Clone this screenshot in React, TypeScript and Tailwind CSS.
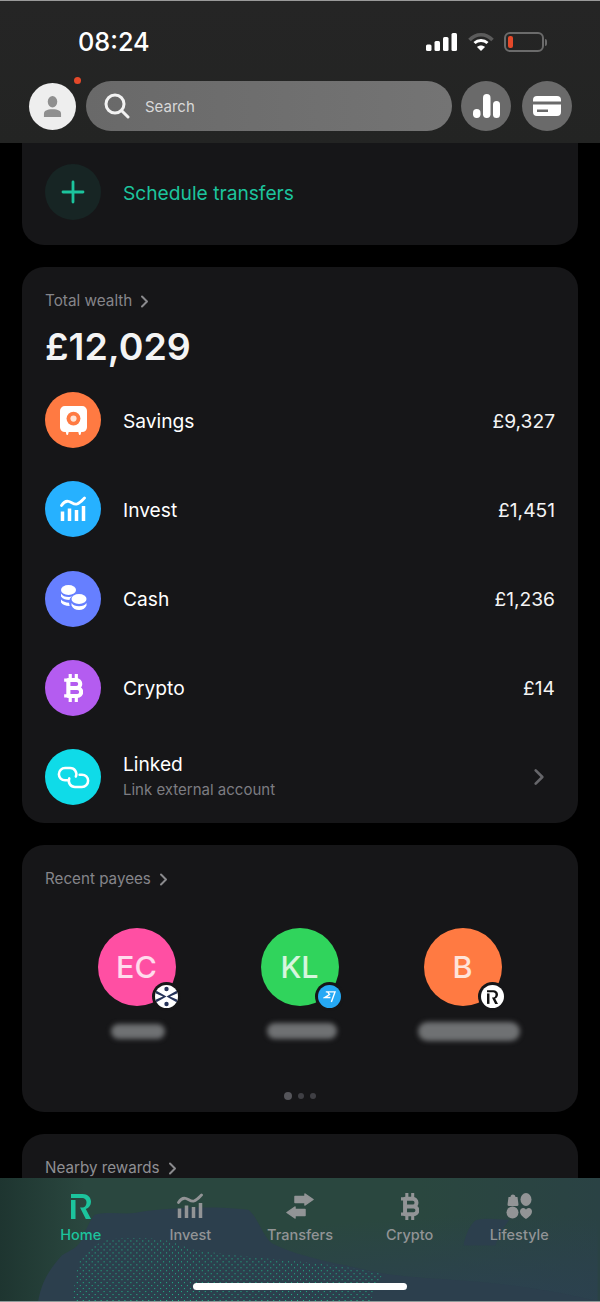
import React from 'react';

const Chevron = ({ className = 'w-[9px] h-[13px] text-[#8a8a8d]' }: { className?: string }) => (
  <svg viewBox="0 0 9 13" className={className} fill="none" stroke="currentColor" strokeWidth="2" strokeLinecap="round" strokeLinejoin="round">
    <path d="M2 1.500 7 6.500 2 11.500" />
  </svg>
);

const BitcoinIcon = ({ className }: { className?: string }) => (
  <svg viewBox="0 0 20 30" className={className} fill="none" stroke="currentColor" strokeWidth="4.400" strokeLinejoin="round">
    <path d="M4.500 6.500h8.500a4.200 4.200 0 0 1 0 8.500H4.500m0 0h9.500a4.200 4.200 0 0 1 0 8.500H4.500V6.500Z" />
    <path d="M6.500 0v6M13 0v6M6.500 24v6M13 24v6M0 6.500h5M0 23.500h5" strokeWidth="3.400" />
  </svg>
);

const InvestIcon = ({ className }: { className?: string }) => (
  <svg viewBox="0 0 26 26" className={className} fill="none" stroke="currentColor" strokeLinecap="round">
    <path d="M1.500 9.500C4 5.500 6 4.500 9 5.500s5 3.500 8 2.500 5-3.500 7.500-6" strokeWidth="2.800" />
    <path d="M2.500 15.500V25M9.500 12.500V25M16.500 14V25M23.500 10V25" strokeWidth="3.500" strokeLinecap="butt" />
  </svg>
);

const SafeIcon = () => (
  <svg viewBox="0 0 28 30" className="w-[27px] h-[29px]">
    <path d="M5 0h18a5 5 0 0 1 5 5v17a5 5 0 0 1-5 5h-1l-.5 2a1 1 0 0 1-2 0l-.5-2H9l-.5 2a1 1 0 0 1-2 0L6 27H5a5 5 0 0 1-5-5V5a5 5 0 0 1 5-5Z" fill="#fff" />
    <circle cx="14" cy="13" r="7.200" fill="#ff7a42" />
    <circle cx="14" cy="13" r="3.200" fill="#ffe3d6" />
  </svg>
);

const CoinsIcon = () => (
  <svg viewBox="0 0 28 28" className="w-[28px] h-[28px]" fill="#fff">
    <ellipse cx="9.500" cy="5" rx="7.500" ry="5" />
    <path d="M2 8.500c1.500 2.500 4 3.500 7.500 3.500 1.500 0 3-.2 4-.7-1.500 1-2.800 2-3 3.700-3.500 0-6.500-.8-8.500-3.500V8.500Z" />
    <path d="M2 14.500c2 2.200 4.500 3 8 3.200l.7 3.300c-4.500 0-7.200-1.200-8.700-3.500v-3Z" />
    <ellipse cx="20" cy="14" rx="7.500" ry="5" />
    <path d="M12.500 18c1.500 2.200 4 3.200 7.500 3.200s6-1 7.500-3.200v2.500C26 23.500 23.500 25 20 25s-6-1.500-7.500-4.500V18Z" />
  </svg>
);

const LinkIcon = () => (
  <svg viewBox="-2 -2 35 24" className="w-[33px] h-[23px]" fill="none" stroke="#fff" strokeWidth="2.700" strokeLinecap="round">
    <path d="M9 13H6.500a6.500 6.500 0 0 1 0-13H12a6.500 6.500 0 0 1 6 9" />
    <path d="M22 7h2.500a6.500 6.500 0 0 1 0 13H17a6.500 6.500 0 0 1-6-9" />
  </svg>
);

const RLogo = ({ className }: { className?: string }) => (
  <svg viewBox="0 0 20 25" className={className} fill="currentColor">
    <path d="M0 6h4.500v19H0V6Z" />
    <path d="M0 0h11.500C16.500 0 20 3.300 20 7.800c0 3.500-2 6.200-5.200 7.200L20 25h-5.200L9 13.500h2.300c2.700 0 4.200-2.200 4.200-5.500 0-2.300-1.800-4-4.300-4H0V0Z" />
  </svg>
);

const TransferIcon = ({ className }: { className?: string }) => (
  <svg viewBox="0 0 28 26" className={className} fill="currentColor" stroke="currentColor" strokeWidth="1.500" strokeLinejoin="round">
    <path d="M9 3.500h10V1l8 5.500-8 5.500V9.500H9Z" />
    <path d="M19 16.500H9V14l-8 5.500L9 25v-2.500h10Z" />
  </svg>
);

const LifestyleIcon = ({ className }: { className?: string }) => (
  <svg viewBox="0 0 26 26" className={className} fill="currentColor">
    <path d="M2.500 4h2a2.500 2.500 0 0 1 5 0h2l1 7.500a1.500 1.500 0 0 1-1.500 1.500H3a1.500 1.500 0 0 1-1.500-1.500L2.500 4Z" />
    <ellipse cx="20" cy="6.500" rx="5.500" ry="6.500" />
    <circle cx="6.500" cy="19.500" r="6" />
    <path d="M20 26c-3-2-6-4.500-6-7.500 0-2 1.500-3.500 3.200-3.500 1.300 0 2.300.7 2.800 1.800.5-1.100 1.500-1.800 2.800-1.800 1.700 0 3.200 1.500 3.200 3.500 0 3-3 5.500-6 7.500Z" />
  </svg>
);

const accounts = [
  { name: 'Savings', value: '£9,327', bg: 'bg-[#ff7a42]', icon: <SafeIcon /> },
  { name: 'Invest', value: '£1,451', bg: 'bg-[#26b1ff]', icon: <InvestIcon className="w-[26px] h-[26px] text-white" /> },
  { name: 'Cash', value: '£1,236', bg: 'bg-[#667fff]', icon: <CoinsIcon /> },
  { name: 'Crypto', value: '£14', bg: 'bg-[#b45cf0]', icon: <BitcoinIcon className="w-[19px] h-[28px] text-white" /> },
];

const payees = [
  {
    initials: 'EC',
    bg: 'bg-[#ff4fa3]',
    blur: 'w-[54px] h-[15px] ml-[2px]',
    badge: (
      <div className="w-[23px] h-[23px] rounded-full bg-white overflow-hidden">
        <svg viewBox="0 0 23 23" className="w-full h-full" fill="#26335a">
          <path d="M1 5.500 11.500 11.500 22 5.500v3L15 11.500l7 3v3L11.500 11.500 1 17.500v-3L8 11.500l-7-3Z" />
          <circle cx="11.500" cy="4" r="2.200" />
          <circle cx="11.500" cy="19" r="2.200" />
        </svg>
      </div>
    ),
  },
  {
    initials: 'KL',
    bg: 'bg-[#30d45c]',
    blur: 'w-[70px] h-[16px] ml-[4px]',
    badge: (
      <div className="w-[23px] h-[23px] rounded-full bg-[#26a9f5] flex items-center justify-center">
        <svg viewBox="0 0 14 14" className="w-[13px] h-[13px]" fill="none" stroke="#fff" strokeWidth="1.500">
          <path d="M3 2h10L9 13M5 2l2 3-5 3h6" />
        </svg>
      </div>
    ),
  },
  {
    initials: 'B',
    bg: 'bg-[#ff7a42]',
    blur: 'w-[102px] h-[19px] ml-[12px]',
    badge: (
      <div className="w-[23px] h-[23px] rounded-full bg-white flex items-center justify-center">
        <RLogo className="w-[11px] h-[14px] text-[#111]" />
      </div>
    ),
  },
];

const tabs = [
  { label: 'Home', active: true, icon: <RLogo className="w-[20px] h-[25px]" /> },
  { label: 'Invest', icon: <InvestIcon className="w-[26px] h-[26px]" /> },
  { label: 'Transfers', icon: <TransferIcon className="w-[28px] h-[26px]" /> },
  { label: 'Crypto', icon: <BitcoinIcon className="w-[18px] h-[27px]" /> },
  { label: 'Lifestyle', icon: <LifestyleIcon className="w-[26px] h-[26px]" /> },
];

export default function App() {
  return (
    <div className="relative w-[600px] h-[1302px] overflow-hidden bg-black flex flex-col font-['Inter',sans-serif] text-white">
      {/* top bar */}
      <header className="h-[143px] shrink-0 flex flex-col bg-gradient-to-b from-[#252525] to-[#232423] border-t border-[#9a9a9a]">
        <div className="flex items-center justify-between pl-[78px] pr-[53px] pt-[2px] h-[80px]">
          <span className="text-[25.300px] font-medium leading-none">08:24</span>
          <div className="flex items-center">
            <svg viewBox="0 0 31 18" className="w-[31px] h-[18px] mr-[11px]" fill="#fff">
              <rect x="0" y="11.500" width="5.500" height="6.500" rx="1.500" />
              <rect x="8.500" y="8" width="5.500" height="10" rx="1.500" />
              <rect x="17" y="4" width="5.500" height="14" rx="1.500" />
              <rect x="25.500" y="0" width="5.500" height="18" rx="1.500" />
            </svg>
            <svg viewBox="0 0 26 18" className="w-[26px] h-[18px] mr-[10px]" fill="none">
              <path d="M1.500 7C8 0 18 0 24.500 7" stroke="#5b5b5b" strokeWidth="3.500" />
              <path d="M6.500 10c3.500-3.300 9.500-3.300 13 0" stroke="#fff" strokeWidth="3" />
              <path d="M13 18 9 14c2.300-2 5.700-2 8 0l-4 4Z" fill="#fff" />
            </svg>
            <div className="flex items-center">
              <div className="w-[40px] h-[20px] rounded-[6px] border-2 border-[#6b6b6b] p-[2px]">
                <div className="w-[5px] h-full rounded-[2px] bg-[#e5492a]" />
              </div>
              <div className="w-[2px] h-[7px] ml-[1px] rounded-r-sm bg-[#6b6b6b]" />
            </div>
          </div>
        </div>
        <div className="flex items-center pl-[29px] pr-[28px]">
          <div className="relative w-[47px] h-[47px] rounded-full bg-[#eeeeee] flex items-center justify-center shrink-0">
            <svg viewBox="0 0 20 22" className="w-[19px] h-[21px]" fill="#8f8f8f">
              <ellipse cx="10" cy="6" rx="5" ry="6" />
              <path d="M1 22v-3c0-3.500 3-5 9-5s9 1.500 9 5v3H1Z" />
            </svg>
            <div className="absolute right-[-5px] top-[-6px] w-[7px] h-[7px] rounded-full bg-[#e5492a]" />
          </div>
          <div className="ml-[10px] w-[366px] h-[50px] rounded-full bg-gradient-to-r from-[#696969] to-[#747474] flex items-center pl-[18px] shrink-0">
            <svg viewBox="0 0 26 26" className="w-[26px] h-[26px]" fill="none" stroke="#f2f2f2" strokeWidth="3" strokeLinecap="round">
              <circle cx="11" cy="11" r="9" />
              <path d="M18 18l6 6" />
            </svg>
            <span className="ml-[15px] mt-[2px] text-[15px] text-[#d8d8d8]">Search</span>
          </div>
          <div className="ml-[9px] w-[50px] h-[50px] rounded-full bg-[#6a6a6a] flex items-center justify-center shrink-0">
            <svg viewBox="0 0 27 24" className="w-[27px] h-[24px]" fill="#fff">
              <rect x="0" y="15" width="7.500" height="9" rx="3.700" />
              <rect x="10" y="0" width="7.500" height="24" rx="3.700" />
              <rect x="20" y="7" width="7" height="17" rx="3.500" />
            </svg>
          </div>
          <div className="ml-[11px] w-[50px] h-[50px] rounded-full bg-[#6a6a6a] flex items-center justify-center shrink-0">
            <svg viewBox="0 0 28 20" className="w-[28px] h-[20px]">
              <path d="M4 0h20a4 4 0 0 1 4 4v1.500H0V4a4 4 0 0 1 4-4Z" fill="#fff" />
              <path d="M0 8.500h28V16a4 4 0 0 1-4 4H4a4 4 0 0 1-4-4V8.500Zm4 5v2.500h11v-2.500H4Z" fill="#fff" fillRule="evenodd" />
            </svg>
          </div>
        </div>
      </header>

      {/* scrolling content */}
      <main className="flex-1 min-h-0 overflow-hidden flex flex-col gap-[22px] px-[22px]">
        <section className="h-[102px] shrink-0 rounded-b-[22px] bg-[#161618] flex items-start pl-[23px] pt-[21px]">
          <div className="w-[56px] h-[56px] rounded-full bg-[#172524] flex items-center justify-center">
            <svg viewBox="0 0 24 24" className="w-[24px] h-[24px]" fill="none" stroke="#1cc49d" strokeWidth="2.800" strokeLinecap="round">
              <path d="M12 2v20M2 12h20" />
            </svg>
          </div>
          <span className="ml-[22px] mt-[17px] text-[19.200px] leading-[24px] text-[#1cc49d]">Schedule transfers</span>
        </section>

        <section className="h-[556px] shrink-0 rounded-[22px] bg-[#161618] flex flex-col px-[23px] pt-[25px]">
          <div className="flex items-center gap-[8px] h-[18px]">
            <span className="text-[15.300px] text-[#85858a]">Total wealth</span>
            <Chevron />
          </div>
          <div className="mt-[14px] text-[37.500px] leading-[46px] font-semibold text-[#f4f4f4]">£12,029</div>
          <div className="mt-[22px] flex flex-col gap-[33.300px]">
            {accounts.map((a) => (
              <div key={a.name} className="flex items-center h-[56px]">
                <div className={`w-[56px] h-[56px] rounded-full flex items-center justify-center ${a.bg}`}>{a.icon}</div>
                <span className="ml-[22px] mt-[2px] text-[19.200px]">{a.name}</span>
                <span className="ml-auto mt-[2px] text-[19.200px] text-[#f4f4f4]">{a.value}</span>
              </div>
            ))}
            <div className="flex items-center h-[56px]">
              <div className="w-[56px] h-[56px] rounded-full bg-[#0fdbe8] flex items-center justify-center">
                <LinkIcon />
              </div>
              <div className="ml-[22px] flex flex-col">
                <span className="text-[19.200px] leading-[26px]">Linked</span>
                <span className="text-[15px] leading-[26px] text-[#7d7d82]">Link external account</span>
              </div>
              <Chevron className="ml-auto mr-[10px] w-[12px] h-[18px] text-[#66666a]" />
            </div>
          </div>
        </section>

        <section className="h-[267px] shrink-0 rounded-[22px] bg-[#161618] flex flex-col px-[23px] pt-[25px]">
          <div className="flex items-center gap-[8px] h-[18px]">
            <span className="text-[15.200px] text-[#85858a]">Recent payees</span>
            <Chevron />
          </div>
          <div className="mt-[40px] grid grid-cols-3 w-[489px] ml-[10px]">
            {payees.map((p) => (
              <div key={p.initials} className="flex flex-col items-center">
                <div className={`relative w-[78px] h-[78px] rounded-full flex items-center justify-center ${p.bg}`}>
                  <span className="text-[30.500px] font-medium text-white/80">{p.initials}</span>
                  <div className="absolute right-[-5px] bottom-[-5px] p-[3px] rounded-full bg-[#161618]">{p.badge}</div>
                </div>
                <div className="mt-[15px] h-[20px] flex items-center">
                  <div className={`rounded-full bg-[#6f7173] blur-[2.500px] ${p.blur}`} />
                </div>
              </div>
            ))}
          </div>
          <div className="mt-auto mb-[12px] flex items-center justify-center gap-[6px]">
            <div className="w-[8px] h-[8px] rounded-full bg-[#55555a]" />
            <div className="w-[6px] h-[6px] rounded-full bg-[#3f3f44]" />
            <div className="w-[6px] h-[6px] rounded-full bg-[#3f3f44]" />
          </div>
        </section>

        <section className="flex-1 rounded-t-[22px] bg-[#161618] px-[23px] pt-[25px]">
          <div className="flex items-center gap-[8px] h-[18px]">
            <span className="text-[15.200px] text-[#8f8f93]">Nearby rewards</span>
            <Chevron />
          </div>
        </section>
      </main>

      {/* bottom tabs */}
      <nav className="relative h-[124px] shrink-0 overflow-hidden border-b border-[#8f9a9a] bg-[linear-gradient(90deg,#1e3530_0%,#2a473f_14%,#2a473f_70%,#2a4244_100%)]">
        <svg viewBox="0 0 600 124" className="absolute inset-0 w-full h-full">
          <defs>
            <pattern id="dots" width="6" height="6" patternUnits="userSpaceOnUse">
              <rect x="0" y="0" width="1" height="1" fill="#1fb98a" />
              <rect x="3" y="3" width="1" height="1" fill="#1fb98a" />
            </pattern>
            <radialGradient id="corner" cx="0.850" cy="1" r="0.700">
              <stop offset="0" stopColor="#2c4150" />
              <stop offset="1" stopColor="#2c4150" stopOpacity="0" />
            </radialGradient>
          </defs>
          <rect width="600" height="124" fill="url(#corner)" />
          <path d="M36 124C40 105 45 95 60 78c10-6 16-8 20-16 5-12 10-22 13-25 17-4 32 1 47-3 30-4 70-6 108-2 10 8 14 26 24 34 23 12 58 19 111 30 47 8 117 4 217 28Z" fill="#2c3f4d" />
          <path d="M465 68c2-14 10-26 14-26 10-2 20 0 32 0-6 8-10 14-14 26Z" fill="#2c3f4d" />
          <path d="M71 124c1-14 3-28 6-39 8-12 18-20 30-23 18-2 36-2 54 0 10 2 20 6 30 10 40 6 75 9 115 13 30 3 55 7 77 12l-12 27Z" fill="url(#dots)" />
        </svg>
        <div className="relative grid grid-cols-5 px-[26px] pt-[14px]">
          {tabs.map((t) => (
            <div key={t.label} className={`flex flex-col items-center ${t.active ? 'text-[#1cc49d]' : 'text-[#929496]'}`}>
              <div className="h-[28px] flex items-center justify-center">{t.icon}</div>
              <span className="mt-[5px] text-[14.500px] leading-[20px] font-medium">{t.label}</span>
            </div>
          ))}
        </div>
        <div className="absolute left-[193px] bottom-[11px] w-[214px] h-[7px] rounded-full bg-white" />
      </nav>
    </div>
  );
}
